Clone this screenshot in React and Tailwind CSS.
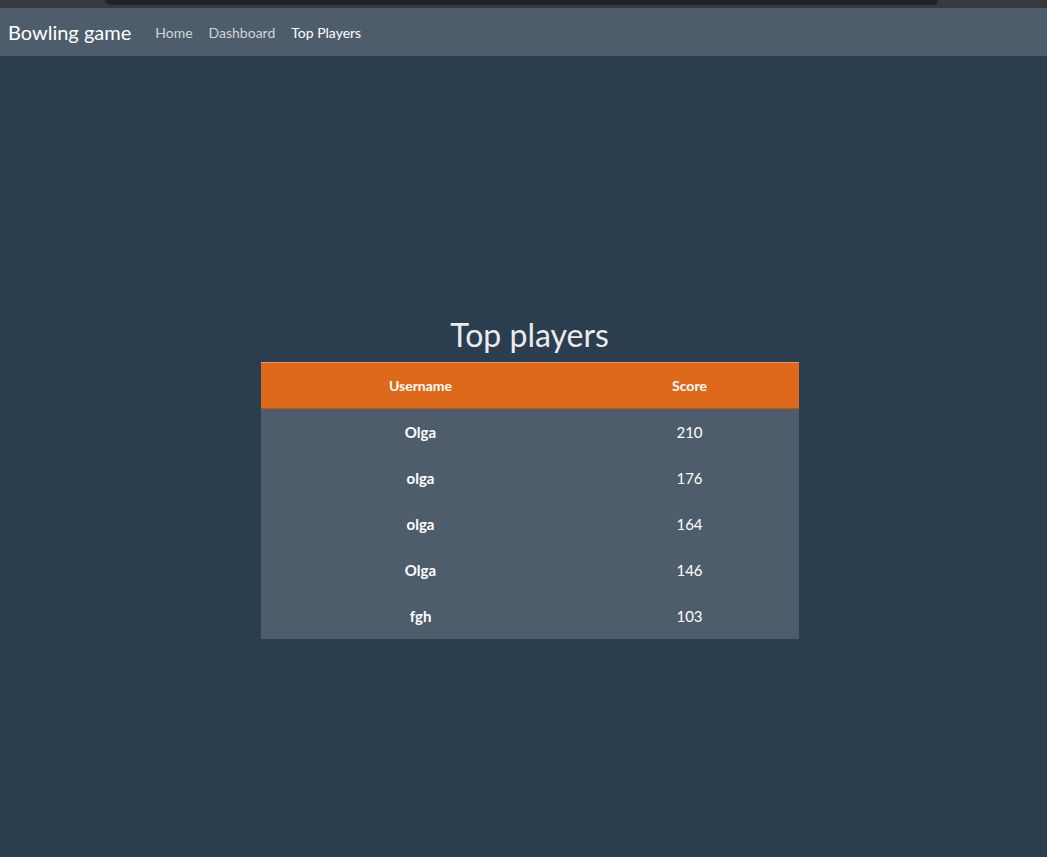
import React from 'react';

const players = [
  { name: 'Olga', score: 210 },
  { name: 'olga', score: 176 },
  { name: 'olga', score: 164 },
  { name: 'Olga', score: 146 },
  { name: 'fgh', score: 103 },
];

const App = () => {
  return (
    <div
      className="min-h-screen bg-[#2b3e50] text-white"
      style={{ fontFamily: 'Lato, "Open Sans", sans-serif' }}
    >
      <div className="h-2 bg-[#37393c] px-[105px]">
        <div className="h-[5px] bg-[#202327] rounded-b-md w-[833px]"></div>
      </div>
      <nav className="h-12 bg-[#4e5d6c] flex items-center px-2">
        <a href="#" className="text-[20px] text-white mr-4">
          Bowling game
        </a>
        <ul className="flex items-center text-[14px]">
          <li>
            <a href="#" className="px-2 text-white/75">Home</a>
          </li>
          <li>
            <a href="#" className="px-2 text-white/75">Dashboard</a>
          </li>
          <li>
            <a href="#" className="px-2 text-white">Top Players</a>
          </li>
        </ul>
      </nav>

      <main className="pt-[260px] pl-3 flex flex-col items-center">
        <h2 className="text-[32px] leading-[1.2] text-[#ebebeb] mb-2">Top players</h2>
        <table className="w-[538px] text-[15px] border-collapse">
          <thead>
            <tr className="bg-[#df691a] border-t border-[#e8935a] border-b border-b-[#b85616]">
              <th className="w-[320px] py-3 px-3 font-bold text-[14px] leading-[21px]">Username</th>
              <th className="py-3 px-3 font-bold text-[14px] leading-[21px]">Score</th>
            </tr>
          </thead>
          <tbody className="bg-[#4e5d6c]">
            {players.map((p, i) => (
              <tr key={i}>
                <td className="py-3 px-3 text-center font-bold leading-[22px]">{p.name}</td>
                <td className="py-3 px-3 text-center leading-[22px]">{p.score}</td>
              </tr>
            ))}
          </tbody>
        </table>
      </main>
    </div>
  );
};

export default App;
